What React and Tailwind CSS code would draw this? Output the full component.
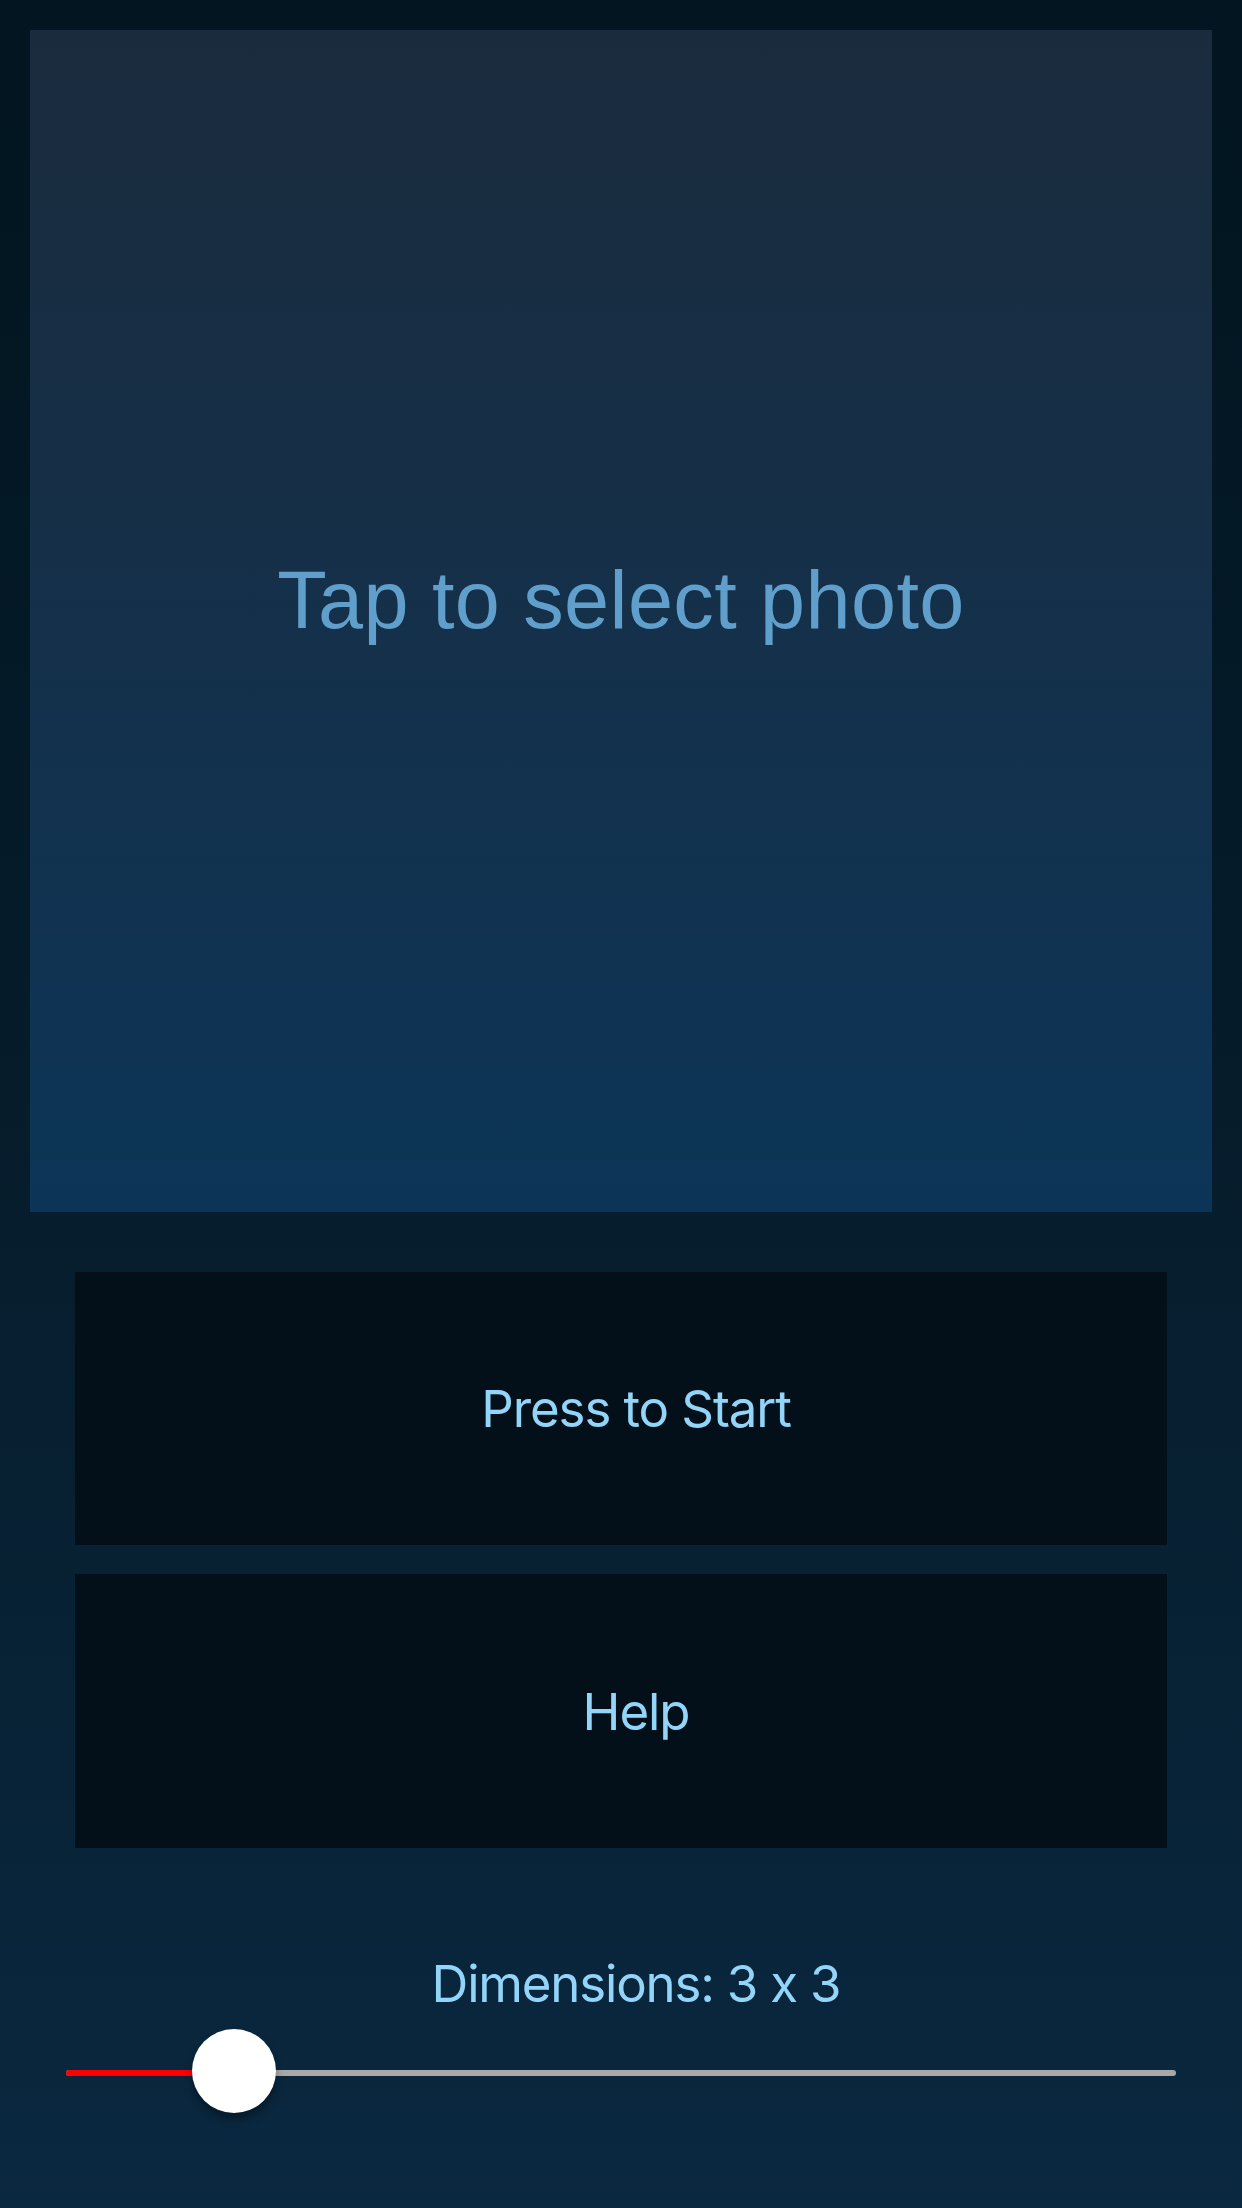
import React from "react";

const labelFont = {
    fontFamily: "Inter, 'Noto Sans', sans-serif",
    fontFeatureSettings: "'calt' 0",
};

function MenuButton({ label, className = "" }) {
    return (
        <button
            className={`w-full flex items-center justify-center bg-[#03101a] pl-[30px] ${className}`}
        >
            <span className="text-[51px] leading-none tracking-[-1.1px] text-[#93d5f8]" style={labelFont}>
                {label}
            </span>
        </button>
    );
}

export default function App() {
    const value = 168; // px from track start

    return (
        <div className="w-[1242px] min-h-[2208px] flex flex-col bg-gradient-to-b from-[#021520] via-[#061c2b] to-[#0a2840]">
            {/* Photo picker */}
            <div className="px-[30px] pt-[30px]">
                <div className="h-[1182px] flex items-center justify-center pb-[42px] bg-gradient-to-b from-[#1a2b3d] to-[#0b3557]">
                    <span className="text-[81px] leading-none tracking-[0.4px] text-[#609fcb] font-['Liberation_Sans',Arial,sans-serif]">
                        Tap to select photo
                    </span>
                </div>
            </div>

            {/* Actions */}
            <div className="px-[75px] mt-[60px] flex flex-col gap-[29px]">
                <MenuButton label="Press to Start" className="h-[273px]" />
                <MenuButton label="Help" className="h-[274px]" />
            </div>

            {/* Dimensions */}
            <div className="mt-[110px] flex justify-center pl-[30px]">
                <span className="text-[51px] leading-none tracking-[-1.2px] text-[#93d5f8]" style={labelFont}>
                    Dimensions: 3 x 3
                </span>
            </div>

            <div className="mt-[20px] px-[66px]">
                <div className="relative h-[84px] flex items-center">
                    <div className="w-full h-[6px] rounded-full bg-[#a8a8a8] translate-y-[2px]" />
                    <div
                        className="absolute left-0 top-1/2 h-[6px] rounded-l-full bg-[#ff0000] translate-y-[-1px]"
                        style={{ width: value }}
                    />
                    <div
                        className="absolute top-0 w-[84px] h-[84px] rounded-full bg-white shadow-[0_6px_8px_rgba(0,0,0,0.35)]"
                        style={{ left: value - 42 }}
                    />
                </div>
            </div>
        </div>
    );
}
